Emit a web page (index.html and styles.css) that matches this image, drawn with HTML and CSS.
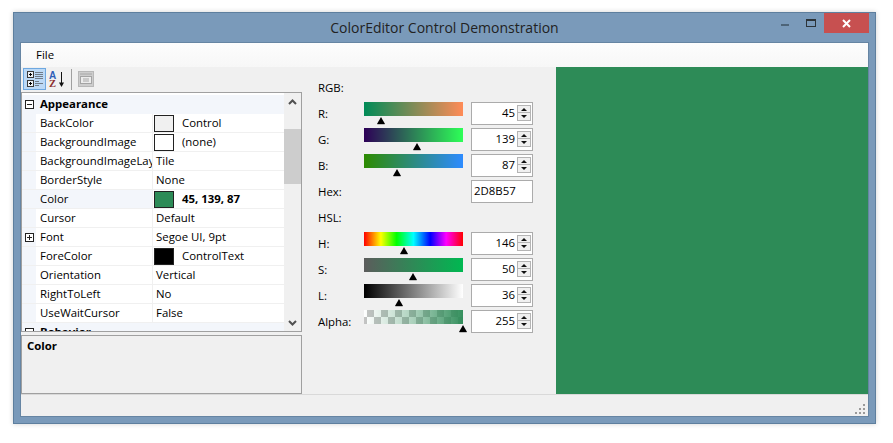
FILE: index.html
```html
<!DOCTYPE html>
<html lang="en">
<head>
<meta charset="utf-8">
<title>ColorEditor Control Demonstration</title>
<link rel="stylesheet" href="styles.css">
</head>
<body>
<div class="window">
  <div class="titlebar">
    <div class="title">ColorEditor Control Demonstration</div>
    <div class="caption">
      <div class="cap-btn"><span class="min-icon"></span></div>
      <div class="cap-btn"><span class="max-icon"></span></div>
      <div class="close-btn">
        <svg width="9" height="9" viewBox="0 0 9 9"><path d="M1 1L8 8M8 1L1 8" stroke="#fff" stroke-width="2" fill="none"/></svg>
      </div>
    </div>
  </div>
  <div class="client">
    <div class="menubar"><span class="menu-item">File</span></div>
    <div class="main">
      <div class="left">
        <div class="toolbar">
          <div class="tool active">
            <svg width="18" height="18" viewBox="0 0 18 18">
              <rect x="1.500" y="1.500" width="6" height="6" fill="#eef2f6" stroke="#3a3a3a"/>
              <path d="M3 4.500h3M4.500 3v3" stroke="#000"/>
              <rect x="1.500" y="10.500" width="6" height="6" fill="#eef2f6" stroke="#3a3a3a"/>
              <path d="M3 13.500h3M4.500 12v3" stroke="#000"/>
              <path d="M9 2.500h8M9 4.500h8M9 6.500h8M9 8.500h8M9 11.500h4M9 13.500h8M9 15.500h4" stroke="#6f7b88"/>
            </svg>
          </div>
          <div class="tool">
            <svg width="20" height="20" viewBox="0 0 20 20">
              <text x="0" y="10" class="az-a">A</text>
              <text x="0" y="18" class="az-z">Z</text>
              <path d="M12.500 3v12" stroke="#111" fill="none"/>
              <path d="M10 13.500h5l-2.500 4.500z" fill="#111"/>
            </svg>
          </div>
          <div class="tool-sep"></div>
          <div class="tool disabled">
            <svg width="16" height="16" viewBox="0 0 16 16">
              <rect x="0.500" y="0.500" width="15" height="15" fill="#cdcdcd" stroke="#b8b8b8"/>
              <rect x="2.500" y="5.500" width="11" height="7" fill="#ececec" stroke="#a4a4a4"/>
              <path d="M2 3h12M5 8h6M5 10h6" stroke="#a8a8a8"/>
            </svg>
          </div>
        </div>
        <div class="grid-box">
          <div class="grid-rows">
            <div class="row cat"><span class="gutter"><span class="tree minus"></span></span><span class="cat-name">Appearance</span></div>
            <div class="row"><span class="gutter"></span><span class="name">BackColor</span><span class="val"><span class="swatch sw-control"></span>Control</span></div>
            <div class="row"><span class="gutter"></span><span class="name">BackgroundImage</span><span class="val"><span class="swatch"></span>(none)</span></div>
            <div class="row"><span class="gutter"></span><span class="name">BackgroundImageLayout</span><span class="val">Tile</span></div>
            <div class="row"><span class="gutter"></span><span class="name">BorderStyle</span><span class="val">None</span></div>
            <div class="row selected"><span class="gutter"></span><span class="name">Color</span><span class="val strong"><span class="swatch sw-green"></span>45, 139, 87</span></div>
            <div class="row"><span class="gutter"></span><span class="name">Cursor</span><span class="val">Default</span></div>
            <div class="row"><span class="gutter"><span class="tree plus"></span></span><span class="name">Font</span><span class="val">Segoe UI, 9pt</span></div>
            <div class="row"><span class="gutter"></span><span class="name">ForeColor</span><span class="val"><span class="swatch sw-black"></span>ControlText</span></div>
            <div class="row"><span class="gutter"></span><span class="name">Orientation</span><span class="val">Vertical</span></div>
            <div class="row"><span class="gutter"></span><span class="name">RightToLeft</span><span class="val">No</span></div>
            <div class="row"><span class="gutter"></span><span class="name">UseWaitCursor</span><span class="val">False</span></div>
            <div class="row cat"><span class="gutter"><span class="tree minus"></span></span><span class="cat-name">Behavior</span></div>
          </div>
          <div class="scrollbar">
            <div class="arrow"><svg width="9" height="6" viewBox="0 0 9 6"><path d="M1 5L4.500 1.500L8 5" stroke="#505050" stroke-width="2" fill="none"/></svg></div>
            <div class="track"><div class="thumb"></div></div>
            <div class="arrow"><svg width="9" height="6" viewBox="0 0 9 6"><path d="M1 1L4.500 4.500L8 1" stroke="#505050" stroke-width="2" fill="none"/></svg></div>
          </div>
        </div>
        <div class="help"><b>Color</b></div>
      </div>
      <div class="editor">
        <div class="heading">RGB:</div>

        <div class="label">R:</div>
        <div class="slider"><div class="bar bar-r"></div><span class="pointer" style="left:17px"></span></div>
        <div class="spin"><span class="num">45</span><span class="spin-btns"><span class="up"></span><span class="down"></span></span></div>

        <div class="label">G:</div>
        <div class="slider"><div class="bar bar-g"></div><span class="pointer" style="left:53px"></span></div>
        <div class="spin"><span class="num">139</span><span class="spin-btns"><span class="up"></span><span class="down"></span></span></div>

        <div class="label">B:</div>
        <div class="slider"><div class="bar bar-b"></div><span class="pointer" style="left:33px"></span></div>
        <div class="spin"><span class="num">87</span><span class="spin-btns"><span class="up"></span><span class="down"></span></span></div>

        <div class="label">Hex:</div>
        <div class="slider"></div>
        <div class="spin hex">2D8B57</div>

        <div class="heading">HSL:</div>

        <div class="label">H:</div>
        <div class="slider"><div class="bar bar-h"></div><span class="pointer" style="left:40px"></span></div>
        <div class="spin"><span class="num">146</span><span class="spin-btns"><span class="up"></span><span class="down"></span></span></div>

        <div class="label">S:</div>
        <div class="slider"><div class="bar bar-s"></div><span class="pointer" style="left:49px"></span></div>
        <div class="spin"><span class="num">50</span><span class="spin-btns"><span class="up"></span><span class="down"></span></span></div>

        <div class="label">L:</div>
        <div class="slider"><div class="bar bar-l"></div><span class="pointer" style="left:35px"></span></div>
        <div class="spin"><span class="num">36</span><span class="spin-btns"><span class="up"></span><span class="down"></span></span></div>

        <div class="label">Alpha:</div>
        <div class="slider"><div class="bar bar-a"></div><span class="pointer" style="left:99px"></span></div>
        <div class="spin"><span class="num">255</span><span class="spin-btns"><span class="up"></span><span class="down"></span></span></div>
      </div>
      <div class="preview"></div>
    </div>
    <div class="statusbar">
      <svg class="grip" width="11" height="11" viewBox="0 0 11 11">
        <path d="M8 0h2v2H8zM4 4h2v2H4zM8 4h2v2H8zM0 8h2v2H0zM4 8h2v2H4zM8 8h2v2H8z" fill="#9a9a9a"/>
      </svg>
    </div>
  </div>
</div>
</body>
</html>
```
FILE: styles.css
```css
* { box-sizing: border-box; }
html, body { margin: 0; padding: 0; background: #fff; }
body {
  width: 893px;
  height: 443px;
  overflow: hidden;
  padding: 12px 0 0 13px;
  font-family: "Open Sans", "Noto Sans", sans-serif;
  font-size: 11.4px;
  color: #000;
}
.window {
  width: 863px;
  height: 412px;
  background: #7a9aba;
  border: 1px solid #5e7f9e;
  box-shadow: 0 0 5px rgba(0,0,0,.18);
  display: flex;
  flex-direction: column;
  padding: 0 7px 7px 7px;
}
.titlebar {
  height: 30px;
  flex: none;
  display: flex;
  position: relative;
  align-items: flex-start;
}
.title {
  flex: 1;
  text-align: center;
  font-size: 14px;
  line-height: 30px;
  color: #222;
}
.caption {
  position: absolute;
  right: -1px;
  top: 0;
  display: flex;
  height: 20px;
}
.cap-btn {
  width: 26px;
  height: 20px;
  display: flex;
  align-items: center;
  justify-content: center;
}
.min-icon { width: 8px; height: 2px; background: #4d6478; margin-top: 4px; }
.max-icon { width: 10px; height: 8px; border: 1px solid #2c3338; border-top-width: 2px; }
.close-btn {
  width: 45px;
  height: 20px;
  background: #c75050;
  display: flex;
  align-items: center;
  justify-content: center;
}
.client {
  flex: 1;
  min-height: 0;
  display: flex;
  flex-direction: column;
  background: #f0f0f0;
  box-shadow: 0 0 0 1px #6685a3;
}
.menubar {
  height: 24px;
  flex: none;
  background: linear-gradient(#fdfdfd, #f7f7f7);
  padding-left: 15px;
  line-height: 23px;
}
.main { flex: 1; min-height: 0; display: flex; background: #f0f0f0; }
.left {
  width: 281px;
  flex: none;
  display: flex;
  flex-direction: column;
}
.toolbar {
  height: 25px;
  flex: none;
  display: flex;
  align-items: center;
  gap: 1px;
  padding: 0 0 1px 2px;
}
.tool {
  width: 23px;
  height: 22px;
  display: flex;
  align-items: center;
  justify-content: center;
}
.tool.active { background: #bcd9f6; border: 1px solid #6ea8e0; }
.tool.disabled { width: 22px; }
.tool-sep { width: 1px; height: 21px; background: #a0a0a0; margin: 0 2px 0 0; }
.az-a { font: bold 10px "Liberation Sans", sans-serif; fill: #2f5fb8; }
.az-z { font: bold 10.500px "Liberation Serif", serif; fill: #8c2f2f; }
.grid-box {
  height: 240px;
  flex: none;
  display: flex;
  border: 1px solid #a0a0a0;
  background: #fff;
  overflow: hidden;
}
.grid-rows { flex: 1; min-width: 0; overflow: hidden; padding-top: 2px; }
.row {
  display: flex;
  height: 19px;
  line-height: 18px;
  border-bottom: 1px solid #f0f0f0;
  white-space: nowrap;
}
.gutter {
  width: 14px;
  flex: none;
  background: #f3f6fb;
  display: flex;
  align-items: center;
  justify-content: center;
}
.name {
  width: 117px;
  flex: none;
  padding-left: 4px;
  overflow: hidden;
  border-right: 1px solid #f0f0f0;
}
.val {
  flex: 1;
  padding-left: 3px;
  display: flex;
  align-items: center;
  overflow: hidden;
}
.cat { background: #f3f6fb; border-bottom: 0; }
.cat-name { font-weight: 700; padding-left: 4px; }
.selected { background: #f3f6fb; }
.selected .val { background: #fff; }
.strong { font-weight: 700; }
.swatch {
  width: 20px;
  height: 17px;
  flex: none;
  border: 1px solid #222;
  background: #fff;
  margin: 0 8px 0 -2px;
}
.sw-control { background: #f0f0f0; }
.sw-green { background: #2d8b57; }
.sw-black { background: #000; }
.tree {
  width: 9px;
  height: 9px;
  border: 1px solid #222;
  background:
    linear-gradient(#222, #222) center / 5px 1px no-repeat,
    #fff;
}
.tree.plus {
  background:
    linear-gradient(#222, #222) center / 5px 1px no-repeat,
    linear-gradient(#222, #222) center / 1px 5px no-repeat,
    #fff;
}
.scrollbar {
  width: 17px;
  flex: none;
  display: flex;
  flex-direction: column;
  background: #f0f0f0;
}
.arrow {
  height: 17px;
  flex: none;
  display: flex;
  align-items: center;
  justify-content: center;
}
.track { flex: 1; min-height: 0; }
.thumb { height: 55px; margin-top: 19px; background: #cdcdcd; }
.help {
  height: 59px;
  flex: none;
  margin-top: 3px;
  border: 1px solid #a0a0a0;
  padding: 1px 0 0 5px;
  line-height: 17px;
}
.help b { font-weight: 700; }
.editor {
  width: 254px;
  flex: none;
  padding: 9px 0 0 16px;
  display: grid;
  grid-template-columns: 46px 99px 70px;
  grid-auto-rows: 23px;
  row-gap: 3px;
  align-content: start;
  align-items: center;
}
.heading { grid-column: 1 / -1; }
.slider {
  position: relative;
  height: 23px;
}
.spin {
  margin-left: 8px;
  width: 62px;
  height: 23px;
  border: 1px solid #ababab;
  padding-bottom: 2px;
  background: #fff;
  display: flex;
  align-items: center;
  line-height: 19px;
}
.num { flex: 1; text-align: right; padding-right: 2px; }
.hex { padding-left: 2px; }
.spin-btns {
  width: 14px;
  height: 16px;
  flex: none;
  margin-right: 1px;
  border: 1px solid #b4b4b4;
  background: #b4b4b4;
  display: flex;
  flex-direction: column;
  gap: 1px;
}
.up, .down {
  flex: 1;
  background: #f0f0f0;
  position: relative;
}
.up::after, .down::after {
  content: "";
  position: absolute;
  left: 3px;
  width: 0;
  height: 0;
  border-left: 3px solid transparent;
  border-right: 3px solid transparent;
}
.up::after { top: 2px; border-bottom: 3px solid #111; }
.down::after { top: 2px; border-top: 3px solid #111; }
.bar { height: 14px; width: 99px; }
.bar-r { background: linear-gradient(90deg, rgb(0,139,87), rgb(255,139,87)); }
.bar-g { background: linear-gradient(90deg, rgb(45,0,87), rgb(45,255,87)); }
.bar-b { background: linear-gradient(90deg, rgb(45,139,0), rgb(45,139,255)); }
.bar-h { background: linear-gradient(90deg, #f00, #ff0 17%, #0f0 33%, #0ff 50%, #00f 67%, #f0f 83%, #f00); }
.bar-s { background: linear-gradient(90deg, #5c5c5c, #00b851); }
.bar-l { background: linear-gradient(90deg, #000, #fff); }
.bar-a {
  background:
    linear-gradient(90deg, rgba(45,139,87,0), rgba(45,139,87,.4) 50%, rgba(45,139,87,.96)),
    repeating-conic-gradient(#c4c4c4 0 25%, #fff 0 50%) -4px 0 / 14px 14px;
}
.pointer {
  position: absolute;
  top: 15px;
  width: 0;
  height: 0;
  margin-left: -4px;
  border-left: 4px solid transparent;
  border-right: 4px solid transparent;
  border-bottom: 7px solid #000;
  filter: drop-shadow(0 1px 0 #bdbdbd);
}
.preview { flex: 1; background: #2d8b57; }
.statusbar {
  height: 22px;
  flex: none;
  border-top: 1px solid #d9d9d9;
  background: #f0f0f0;
  position: relative;
}
.grip { position: absolute; right: 2px; bottom: 1px; }
```
